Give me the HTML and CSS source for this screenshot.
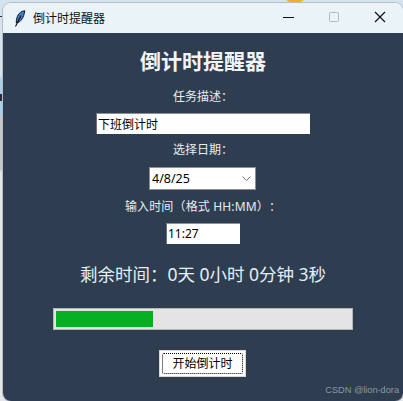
FILE: index.html
```html
<!DOCTYPE html>
<html lang="en">
<head>
  <meta charset="UTF-8" />
  <title>倒计时提醒器</title>
  <link rel="stylesheet" href="styles.css">
</head>
<body>
  <!-- bits of the desktop showing behind the window -->
  <div class="desk-badge"></div>
  <div class="desk-mark desk-mark-top"></div>
  <div class="desk-mark desk-mark-mid"></div>

  <div class="window">
    <div class="titlebar">
      <svg class="app-icon" width="12" height="18" viewBox="0 0 12 18">
        <path d="M10.8 0.8C6.5 1.2 3 4.5 2.4 10.5L2.3 12.8C6.5 12.5 9.8 8 10.8 0.8Z" fill="#3f7fd8" stroke="#111" stroke-width="1"/>
        <path d="M7 5.5L1.5 16.5" stroke="#111" stroke-width="1.1" fill="none"/>
      </svg>
      <span class="app-title">倒计时提醒器</span>
      <div class="win-buttons">
        <svg class="win-btn" width="46" height="30" viewBox="0 0 46 30"><path d="M18 14.5H29" stroke="#111" stroke-width="1.1"/></svg>
        <svg class="win-btn" width="46" height="30" viewBox="0 0 46 30"><rect x="18.5" y="9.5" width="9" height="9" rx="1" fill="none" stroke="#b5b9bb"/></svg>
        <svg class="win-btn" width="46" height="30" viewBox="0 0 46 30"><path d="M18 9L28 19M28 9L18 19" stroke="#111" stroke-width="1.2"/></svg>
      </div>
    </div>

    <div class="content">
      <h1 class="heading">倒计时提醒器</h1>
      <div class="label label-task">任务描述：</div>
      <input class="field field-task" type="text" value="下班倒计时">
      <div class="label label-date">选择日期：</div>
      <div class="date-box">
        <span>4/8/25</span>
        <svg width="9" height="5" viewBox="0 0 9 5"><path d="M0.5 0.5L4.5 4.5L8.5 0.5" fill="none" stroke="#777" stroke-width="1"/></svg>
      </div>
      <div class="label label-time">输入时间（格式 HH:MM）：</div>
      <input class="field field-time" type="text" value="11:27">
      <div class="remaining">剩余时间：0天 0小时 0分钟 3秒</div>
      <div class="progress"><div class="progress-fill" style="width: 97px"></div></div>
      <div class="start-btn"><span class="start-inner">开始倒计时</span></div>
    </div>
    <div class="watermark">CSDN @lion-dora</div>
  </div>
</body>
</html>
```

FILE: styles.css
```css
html, body {
  margin: 0;
  height: 100%;
  overflow: hidden;
}

body {
  position: relative;
  background: linear-gradient(#d5e3f0 0, #d5e3f0 75px, #a9cfec 80px, #a9cfec 114px, #c6c9cd 116px, #c6c9cd 170px, #e3e7ea 172px);
  font-family: "Noto Sans", "Noto Sans CJK SC", sans-serif;
  text-spacing-trim: space-all;
  padding: 3px 0 0 3px;
  box-sizing: border-box;
}

.desk-badge {
  position: absolute;
  left: 280px;
  top: -12px;
  width: 30px;
  height: 15px;
  border-radius: 0 0 15px 15px;
  background: #e9b21f;
}

.desk-mark {
  position: absolute;
  left: 0;
  background: #2b2b3a;
}

.desk-mark-top {
  top: 16px;
  width: 2px;
  height: 1px;
}

.desk-mark-mid {
  top: 94px;
  width: 2px;
  height: 7px;
}

.window {
  position: relative;
  height: 398px;
  border-radius: 8px;
  overflow: hidden;
  box-shadow: 0 0 0 1px #b9bcbf;
  display: flex;
  flex-direction: column;
}

.titlebar {
  height: 30px;
  background: #eaf4f8;
  display: flex;
  align-items: center;
  padding-left: 11px;
  color: #111;
  flex-shrink: 0;
}

.app-icon {
  margin-top: 1px;
}

.app-title {
  font-size: 12px;
  margin-left: 7px;
}

.win-buttons {
  margin-left: auto;
  display: flex;
}

.content {
  flex: 1;
  background: #2e3e50;
  display: flex;
  flex-direction: column;
  align-items: center;
}

.heading {
  margin: 13px 0 0;
  font-size: 21px;
  line-height: 30px;
  font-weight: 700;
  color: #f2f5f7;
}

.label {
  font-size: 12px;
  line-height: 18px;
  color: #e6edf2;
}

.label-task { margin-top: 12px; }
.label-date { margin-top: 7px; }
.label-time { margin-top: 8px; letter-spacing: 0.15px; }

.field {
  border: 0;
  border-top: 1px solid #8b8f93;
  border-left: 1px solid #6d7278;
  background: #fff;
  color: #000;
  font-family: "Noto Sans", "Noto Sans CJK SC", sans-serif;
  font-size: 12px;
  padding: 0 0 1px 1px;
  box-sizing: border-box;
  outline: none;
}

.field-task {
  width: 214px;
  height: 21px;
  margin-top: 7px;
}

.field-time {
  width: 74px;
  height: 21px;
  margin-top: 7px;
}

.date-box {
  width: 107px;
  height: 23px;
  margin-top: 8px;
  margin-right: 1px;
  border: 1px solid #8b8f93;
  box-sizing: border-box;
  background: #fff;
  color: #000;
  font-size: 12.5px;
  display: flex;
  align-items: center;
  justify-content: space-between;
  padding: 0 4px 0 2px;
}

.remaining {
  margin-top: 18px;
  margin-bottom: 1px;
  font-size: 17.5px;
  line-height: 24px;
  color: #e4eef4;
}

.progress {
  width: 300px;
  height: 22px;
  margin-top: 21px;
  border: 1px solid #b5b6b8;
  background: #e4e4e4;
  box-sizing: border-box;
  padding: 2px;
}

.progress-fill {
  height: 100%;
  background: #06b025;
}

.start-btn {
  margin-top: 20px;
  margin-right: 1px;
  background: #fff;
  border: 1px solid #d8d8d8;
  padding: 2px;
  box-sizing: border-box;
  width: 87px;
  height: 27px;
}

.start-inner {
  display: block;
  height: 100%;
  box-sizing: border-box;
  border: 1px dotted #000;
  border-radius: 2px;
  font-size: 12px;
  line-height: 19px;
  text-align: center;
  color: #000;
}

.watermark {
  position: absolute;
  right: 4px;
  bottom: 6px;
  font-family: "Liberation Sans", sans-serif;
  font-size: 9.2px;
  color: #8d98a3;
}
```
